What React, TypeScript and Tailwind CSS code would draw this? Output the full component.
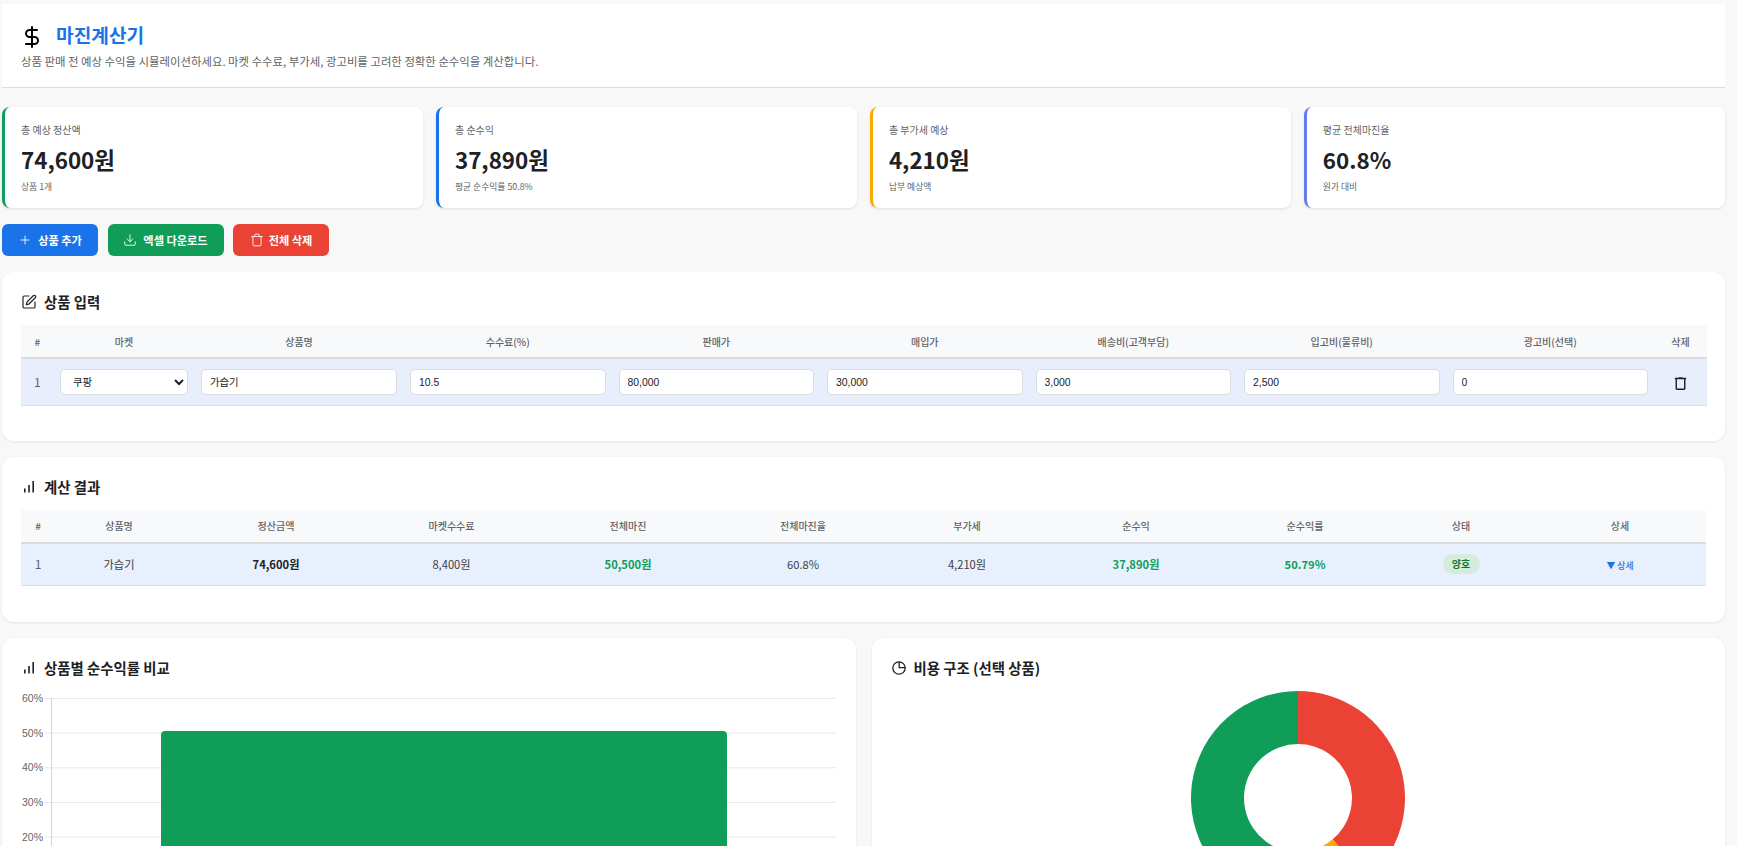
import React from 'react';
import { DollarSign, Plus, Download, Trash, SquarePen } from 'lucide-react';

const summaryCards = [
  { label: '총 예상 정산액', value: '74,600원', sub: '상품 1개', border: 'border-l-[#0f9d58]' },
  { label: '총 순수익', value: '37,890원', sub: '평균 순수익률 50.8%', border: 'border-l-[#1a73e8]' },
  { label: '총 부가세 예상', value: '4,210원', sub: '납부 예상액', border: 'border-l-[#f9ab00]' },
  { label: '평균 전체마진율', value: '60.8%', sub: '원가 대비', border: 'border-l-[#667eea]' },
];

const inputCols = [
  { label: '#', w: 'w-[32.5px]' },
  { label: '마켓', w: 'w-[141px]' },
  { label: '상품명', w: 'w-[209px]' },
  { label: '수수료(%)', w: 'w-[208.5px]' },
  { label: '판매가', w: 'w-[208.5px]' },
  { label: '매입가', w: 'w-[208.5px]' },
  { label: '배송비(고객부담)', w: 'w-[208.5px]' },
  { label: '입고비(물류비)', w: 'w-[208.5px]' },
  { label: '광고비(선택)', w: 'w-[208.5px]' },
  { label: '삭제', w: 'w-[52px]' },
];

const resultCols = [
  { label: '#', w: 'w-[34px]' },
  { label: '상품명', w: 'w-[128px]' },
  { label: '정산금액', w: 'w-[186px]' },
  { label: '마켓수수료', w: 'w-[165px]' },
  { label: '전체마진', w: 'w-[188px]' },
  { label: '전체마진율', w: 'w-[162px]' },
  { label: '부가세', w: 'w-[166px]' },
  { label: '순수익', w: 'w-[172px]' },
  { label: '순수익률', w: 'w-[166px]' },
  { label: '상태', w: 'w-[146px]' },
  { label: '상세', w: 'w-[172px]' },
];

const BarIcon = () => (
  <svg width="16" height="16" viewBox="0 0 16 16" className="shrink-0 text-[#202124]" fill="currentColor">
    <rect x="3" y="9.5" width="1.6" height="4" />
    <rect x="7.2" y="6" width="1.6" height="7.5" />
    <rect x="11.4" y="2" width="1.6" height="11.5" />
  </svg>
);

const PieIcon = () => (
  <svg width="16" height="16" viewBox="0 0 16 16" fill="none" stroke="#202124" strokeWidth="1.3" className="shrink-0">
    <circle cx="8" cy="8" r="6.2" />
    <path d="M8.2 2v5.6h6" />
  </svg>
);

const RowTrash = () => (
  <svg width="17" height="17" viewBox="0 0 24 24" fill="#202124" className="mx-auto mt-[3px]">
    <path d="M7 21q-.825 0-1.412-.587Q5 19.825 5 19V6H4V4h5V3h6v1h5v2h-1v13q0 .825-.587 1.413Q17.825 21 17 21ZM17 6H7v13h10Z" />
  </svg>
);

const Section = ({ icon, title, children, className = '' }: { icon: React.ReactNode; title: string; children: React.ReactNode; className?: string }) => (
  <section className={`bg-white rounded-xl px-[19px] pt-[19px] shadow-[0_1px_3px_rgba(0,0,0,0.08)] ${className}`}>
    <h2 className="h-[22px] mb-3 flex items-center gap-[7px] text-[14.4px] font-bold text-[#202124]">
      {icon}
      {title}
    </h2>
    {children}
  </section>
);

const TableHead = ({ cols }: { cols: { label: string; w: string }[] }) => (
  <thead>
    <tr className="h-[33px] bg-[#f8f9fa] border-b-2 border-[#dadce0]">
      {cols.map((c) => (
        <th key={c.label} className={`${c.w} p-0 text-center text-[10px] font-medium text-[#5f6368]`}>
          {c.label}
        </th>
      ))}
    </tr>
  </thead>
);

const inputClass =
  "w-full h-[26px] px-2 bg-white border border-[#dadce0] rounded-[5px] text-[10.4px] text-[#202124] font-['Liberation_Sans','Noto_Sans_CJK_KR',sans-serif] outline-none";

const NumberField = ({ value }: { value: string }) => (
  <td className="px-[6.5px] pb-[2px]">
    <input type="text" defaultValue={value} className={inputClass} />
  </td>
);

const ProfitChart = () => {
  const ticks = ['60%', '50%', '40%', '30%', '20%', '10%', '0%'];
  return (
    <svg width="815" height="240" className="block">
      {ticks.map((t, i) => {
        const y = 7.5 + i * 34.65;
        return (
          <g key={t}>
            <line x1="24" x2="815" y1={y} y2={y} stroke="#e8e8e8" />
            <text x="22" y={y + 3.5} textAnchor="end" fontSize="10.5" fill="#666" fontFamily="Liberation Sans, sans-serif">
              {t}
            </text>
          </g>
        );
      })}
      <line x1="30.5" x2="30.5" y1="7" y2="240" stroke="#d4d4d4" />
      <path d="M140 240V44a4 4 0 0 1 4-4h558a4 4 0 0 1 4 4v196z" fill="#0f9d58" />
    </svg>
  );
};

// 도넛 조각 경로 (각도는 12시 방향 기준 시계방향)
const arc = (from: number, to: number, r1 = 107, r2 = 54, cx = 407, cy = 107) => {
  const pt = (a: number, r: number) => {
    const rad = ((a - 90) * Math.PI) / 180;
    return `${(cx + r * Math.cos(rad)).toFixed(2)} ${(cy + r * Math.sin(rad)).toFixed(2)}`;
  };
  const large = to - from > 180 ? 1 : 0;
  return `M${pt(from, r1)}A${r1} ${r1} 0 ${large} 1 ${pt(to, r1)}L${pt(to, r2)}A${r2} ${r2} 0 ${large} 0 ${pt(from, r2)}Z`;
};

const CostDonut = () => (
  <svg width="815" height="240" className="block">
    <path d={arc(0, 140)} fill="#ea4335" />
    <path d={arc(140, 158)} fill="#f9ab00" />
    <path d={arc(158, 196)} fill="#1a73e8" />
    <path d={arc(196, 360)} fill="#0f9d58" />
  </svg>
);

export default function App() {
  return (
    <div className="h-screen overflow-hidden bg-[#f8f8f8] pl-[2px] pr-3 pt-1 font-['Noto_Sans_CJK_KR',sans-serif] text-[#202124]">
      <header className="h-[84px] bg-white border-b border-[#dadce0] px-[19px] pt-[17px]">
        <div className="flex items-center gap-[12px] h-7">
          <DollarSign size={24} strokeWidth={2} className="text-black mt-[3px] -ml-px" />
          <h1 className="text-[19.2px] font-bold text-[#1a73e8]">마진계산기</h1>
        </div>
        <p className="mt-[4px] text-[11.4px] text-[#5f6368]">
          상품 판매 전 예상 수익을 시뮬레이션하세요. 마켓 수수료, 부가세, 광고비를 고려한 정확한 순수익을 계산합니다.
        </p>
      </header>

      <div className="grid grid-cols-4 gap-[12.8px] mt-[19px]">
        {summaryCards.map((card) => (
          <div key={card.label} className={`h-[101px] bg-white rounded-lg border-l-[3px] ${card.border} pl-4 pt-[14px] shadow-[0_1px_3px_rgba(0,0,0,0.1)]`}>
            <div className="h-[18px] leading-[18px] text-[10px] text-[#5f6368]">{card.label}</div>
            <div className="mt-[3px] h-[34px] leading-[34px] text-[22.4px] font-bold text-[#202124]">{card.value}</div>
            <div className="mt-[3px] h-[16px] leading-[16px] text-[8.8px] text-[#5f6368]">{card.sub}</div>
          </div>
        ))}
      </div>

      <div className="flex gap-[9.5px] mt-4">
        <button className="w-[96px] h-8 flex items-center justify-center gap-[6px] rounded-md bg-[#1a73e8] text-white text-[11.2px] font-bold">
          <Plus size={14} strokeWidth={1.5} />
          상품 추가
        </button>
        <button className="w-[116px] h-8 flex items-center justify-center gap-[6px] rounded-md bg-[#0f9d58] text-white text-[11.2px] font-bold">
          <Download size={14} strokeWidth={1.5} />
          엑셀 다운로드
        </button>
        <button className="w-[96px] h-8 flex items-center justify-center gap-[5px] rounded-md bg-[#ea4335] text-white text-[11.2px] font-bold">
          <Trash size={14} strokeWidth={1.5} />
          전체 삭제
        </button>
      </div>

      <Section className="mt-4 pb-[35px]" icon={<SquarePen size={16} strokeWidth={1.75} />} title="상품 입력">
        <table className="w-full table-fixed">
          <TableHead cols={inputCols} />
          <tbody>
            <tr className="h-[47px] bg-[#e8eefb] border-b border-[#dadce0]">
              <td className="text-center text-[12px] text-[#5f6368]">1</td>
              <td className="px-[6.5px] pb-[2px]">
                <select defaultValue="쿠팡" className={inputClass}>
                  <option>쿠팡</option>
                  <option>네이버</option>
                  <option>11번가</option>
                </select>
              </td>
              <td className="px-[6.5px] pb-[2px]">
                <input type="text" defaultValue="가습기" className={inputClass} />
              </td>
              <NumberField value="10.5" />
              <NumberField value="80,000" />
              <NumberField value="30,000" />
              <NumberField value="3,000" />
              <NumberField value="2,500" />
              <NumberField value="0" />
              <td>
                <RowTrash />
              </td>
            </tr>
          </tbody>
        </table>
      </Section>

      <Section className="mt-4 pb-9" icon={<BarIcon />} title="계산 결과">
        <table className="w-full table-fixed">
          <TableHead cols={resultCols} />
          <tbody>
            <tr className="h-[43px] bg-[#e8f0fe] border-b border-[#dadce0] text-center text-[11.2px] text-[#3c4043]">
              <td className="text-[12px] text-[#5f6368]">1</td>
              <td>가습기</td>
              <td className="font-bold text-[#202124]">74,600원</td>
              <td>8,400원</td>
              <td className="font-bold text-[#0f9d58]">50,500원</td>
              <td>60.8%</td>
              <td>4,210원</td>
              <td className="font-bold text-[#0f9d58]">37,890원</td>
              <td className="font-bold text-[#0f9d58]">50.79%</td>
              <td>
                <span className="inline-block w-[37px] h-5 leading-5 rounded-full bg-[#d4edda] text-[10px] font-bold text-[#137333]">양호</span>
              </td>
              <td>
                <span className="text-[8.8px] font-medium text-[#1a73e8]">▼ 상세</span>
              </td>
            </tr>
          </tbody>
        </table>
      </Section>

      <div className="grid grid-cols-2 gap-4 mt-4">
        <Section className="h-[340px]" icon={<BarIcon />} title="상품별 순수익률 비교">
          <ProfitChart />
        </Section>
        <Section className="h-[340px]" icon={<PieIcon />} title="비용 구조 (선택 상품)">
          <CostDonut />
        </Section>
      </div>
    </div>
  );
}
